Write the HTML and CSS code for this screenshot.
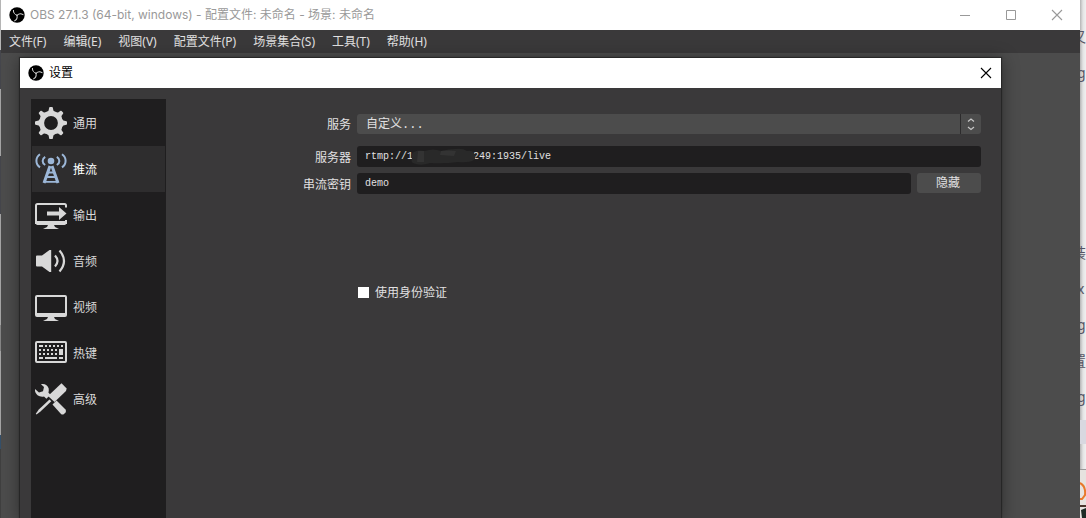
FILE: index.html
```html
<!DOCTYPE html>
<html lang="zh-CN">
<head>
<meta charset="utf-8">
<title>OBS 设置</title>
<link rel="stylesheet" href="styles.css">
</head>
<body>
<svg class="defs" aria-hidden="true">
  <symbol id="obs" viewBox="0 0 16 16">
    <circle cx="8" cy="8" r="7.7" fill="#000"/>
    <g fill="none" stroke="#d8d8d8" stroke-width="1" stroke-linecap="round">
      <path id="blade" d="M8 8.3C5.8 7.6 4.3 6 4.4 3.4"/>
      <use href="#blade" transform="rotate(120 8 8.3)"/>
      <use href="#blade" transform="rotate(240 8 8.3)"/>
    </g>
  </symbol>
  <symbol id="cross" viewBox="0 0 12 12"><path d="M1 1l10 10M11 1L1 11" fill="none" stroke="currentColor" stroke-width="1.1"/></symbol>
</svg>
<div class="desktop">
  <div class="behind-left"></div>
  <div class="window">
    <header class="titlebar">
      <svg class="logo"><use href="#obs"/></svg>
      <span class="window-title">OBS 27.1.3 (64-bit, windows) - 配置文件: 未命名 - 场景: 未命名</span>
      <div class="window-buttons">
        <button class="caption" aria-label="最小化"><svg viewBox="0 0 12 12"><path d="M1 6.5h10" stroke="currentColor"/></svg></button>
        <button class="caption" aria-label="最大化"><svg viewBox="0 0 12 12"><path d="M1.5 1.5h9v9h-9z" fill="none" stroke="currentColor"/></svg></button>
        <button class="caption" aria-label="关闭"><svg><use href="#cross"/></svg></button>
      </div>
    </header>
    <nav class="menubar">
      <button>文件(F)</button><button>编辑(E)</button><button>视图(V)</button><button>配置文件(P)</button><button>场景集合(S)</button><button>工具(T)</button><button>帮助(H)</button>
    </nav>
    <main class="workspace">
      <section class="dialog">
        <header class="dialog-title">
          <svg class="logo"><use href="#obs"/></svg>
          <h1>设置</h1>
          <button class="dialog-close" aria-label="关闭"><svg><use href="#cross"/></svg></button>
        </header>
        <div class="dialog-body">
          <nav class="sidebar">
            <button class="item"><svg viewBox="0 0 32 32">
              <circle cx="16" cy="16" r="9.4" fill="none" stroke="currentColor" stroke-width="5"/>
              <g fill="currentColor">
                <path id="teeth" d="M11.6 5.5L13.6 3.6 14.2.6Q14.4 0 15 0h2q.6 0 .8.6l.6 3 2 1.9zM11.6 26.5l2 1.9.6 3q.2.6.8.6h2q.6 0 .8-.6l.6-3 2-1.9z"/>
                <use href="#teeth" transform="rotate(45 16 16)"/><use href="#teeth" transform="rotate(90 16 16)"/><use href="#teeth" transform="rotate(135 16 16)"/>
              </g></svg><span>通用</span></button>
            <button class="item selected"><svg viewBox="0 0 32 32">
              <g fill="none" stroke="currentColor" stroke-width="2">
                <path d="M5 1.2C.2 4.6.2 11 5 14.4M27 1.2c4.8 3.4 4.8 9.8 0 13.2M10.2 3.8c-3.4 2-3.4 6.2 0 8.2M21.8 3.8c3.4 2 3.4 6.2 0 8.2"/>
                <path d="M15 13L9 30M17 13L23 30" stroke-width="3"/>
                <path d="M13 19.5h6M11.5 24h9M10 28.8h12" stroke-width="1.8"/>
              </g>
              <circle cx="16" cy="8" r="3.3" fill="currentColor"/></svg><span>推流</span></button>
            <button class="item"><svg viewBox="0 0 32 32">
              <path d="M31 8.5V6.5Q31 5 29.5 5H2.5Q1 5 1 6.5V24h30v-3" fill="none" stroke="currentColor" stroke-width="2"/>
              <path d="M1 22h30v2.5q0 1.5-1.5 1.5h-27Q1 26 1 24.5zM13 26h6l1 2 4 2H8l4-2zM12 12.5h12V8l7.5 6.5L24 21v-4.5H12z" fill="currentColor"/></svg><span>输出</span></button>
            <button class="item"><svg viewBox="0 0 32 32">
              <path d="M1 11.5Q1 10.5 2 10.5h5L14.5 5h1.7v22h-1.7L7 21.5H2q-1 0-1-1z" fill="currentColor"/>
              <path d="M20 10.5q5 5.5 0 11M24.5 5.5q9 10.5 0 21" fill="none" stroke="currentColor" stroke-width="2.2"/></svg><span>音频</span></button>
            <button class="item"><svg viewBox="0 0 32 32">
              <path d="M2 5h28q1 0 1 1v17H1V6q0-1 1-1z" fill="none" stroke="currentColor" stroke-width="2"/>
              <path d="M0 22h32v2q0 2-2 2H2q-2 0-2-2zM13 26h6l1 2 4 2H8l4-2z" fill="currentColor"/></svg><span>视频</span></button>
            <button class="item"><svg viewBox="0 0 32 32">
              <rect x="1" y="5" width="30" height="20" rx="1" fill="none" stroke="currentColor" stroke-width="2"/>
              <path d="M4 8h4v2H4zM10 8h2v2h-2zM14 8h2v2h-2zM18 8h2v2h-2zM22 8h2v2h-2zM26 8h2v2h-2zM4 12h2v2H4zM8 12h2v2H8zM12 12h2v2h-2zM16 12h2v2h-2zM20 12h2v2h-2zM24 12h4v6h-4zM4 16h2v2H4zM8 16h2v2H8zM12 16h2v2h-2zM16 16h2v2h-2zM20 16h2v2h-2zM4 20h4v2H4zM10 20h12v2H10zM24 20h4v2h-4z" fill="currentColor"/></svg><span>热键</span></button>
            <button class="item"><svg viewBox="0 0 32 32">
              <g fill="currentColor">
                <path d="M6 1.2C9 .2 13 2 13.7 5.5q.3 2-.3 4l2 2.3-4 4-2.4-2.3C5 14.5.8 12 0 8V6l4 3.5 4-1.3L9 4z"/>
                <path d="M26.5.3L31.7 5.5 31 8 19.5 19 13 13z"/>
                <path d="M14.5 16.5l1.8 1.8L5.5 28.5 1.5 31.5.8 30.8 3.8 26.5z"/>
                <path d="M17.5 21.5l4-4 9 9q1 1.5 0 3l-1.5 1.5q-1.5 1-3 0z"/>
              </g></svg><span>高级</span></button>
          </nav>
          <form class="form">
            <div class="row">
              <label for="service">服务</label>
              <div class="combo">
                <select id="service"><option>自定义...</option></select>
                <svg class="arrows" viewBox="0 0 20 20"><path d="M7 7.5L10 5l3 2.5M7 13l3 2.500 3-2.500" fill="none" stroke="currentColor" stroke-width="1.2"/></svg>
              </div>
            </div>
            <div class="row">
              <label for="server">服务器</label>
              <div class="server">
                <input id="server" type="text" value="rtmp://1          249:1935/live">
                <svg class="smudge" viewBox="0 0 66 16"><path d="M2 5q3-5 13-3 8-3 16 0 8-2 14-2 8-1 12 2 5-1 7 2 3 4 0 7-5 3-16 2-14 2-28 1-8 3-14 1-6-1-4-5-1-3 0-5z" fill="#292929"/><path d="M8 2h6v11H7zM31 2q8-1 15 0l-2 5-14-1z" fill="#333"/></svg>
              </div>
            </div>
            <div class="row">
              <label for="key">串流密钥</label>
              <div class="key-row">
                <input id="key" type="text" value="demo">
                <button type="button" class="hide">隐藏</button>
              </div>
            </div>
            <div class="row auth">
              <input id="auth" type="checkbox">
              <label for="auth">使用身份验证</label>
            </div>
          </form>
        </div>
      </section>
    </main>
  </div>
  <aside class="behind-right">
    <ul class="lines">
      <li class="wide">又</li><li>gi</li><li></li><li></li><li></li><li></li><li class="wide">装</li><li>x</li><li>gi</li><li class="wide">置</li><li>gi</li>
    </ul>
    <div class="band"></div>
    <div class="page-edge"></div>
    <svg class="picture" viewBox="0 0 6 48"><path d="M0 0h6v48H0z" fill="#e6e3df"/><path d="M0 13q6 3 5 12l-3 4H0" fill="none" stroke="#e8792b" stroke-width="2"/><path d="M0 35h6v2H0z" fill="#4a342a"/><path d="M1 40l5-2v10H2z" fill="#1d2b25"/></svg>
  </aside>
</div>
</body>
</html>
```
FILE: styles.css
```css
* { box-sizing: border-box; }
body {
  margin: 0;
  font: 12px/16px "Noto Sans", "Noto Sans CJK SC", sans-serif;
  color: #e1e0e1;
}
button, input, select { font: inherit; color: inherit; margin: 0; border: 0; padding: 0; background: none; }
.defs { position: absolute; width: 0; height: 0; }
.desktop { display: grid; grid-template-columns: 1px 1fr 6px; height: 100vh; overflow: hidden; }
.behind-left { background: linear-gradient(#b5b5b5 0 50px, #45464c 50px 89px, #a5a5a5 89px 156px, #45464c 156px 214px, #a5a5a5 214px 325px, #858585 325px 351px, #a5a5a5 351px 435px, #35506a 435px 449px, #404040 449px); }
.window { display: flex; flex-direction: column; min-width: 0; background: #4c4c4c; }

.titlebar { display: flex; align-items: center; height: 30px; padding-left: 8px; background: #fff; color: #999; }
.logo { flex: none; width: 16px; height: 16px; }
.window-title { margin: 0 auto 0 5px; font-family: Inter, "Noto Sans CJK SC", sans-serif; white-space: nowrap; }
.window-buttons { display: flex; }
.caption { width: 46px; height: 28px; display: grid; place-items: center; }
.caption svg, .dialog-close svg { width: 12px; height: 12px; }

.menubar { display: flex; gap: 17px; height: 23px; padding: 1px 0 0 8px; background: #3a393a; }
.menubar button { white-space: nowrap; }

.workspace { flex: 1; display: flex; min-height: 0; padding: 5px 79px 0 19px; }
.dialog { flex: 1; display: flex; flex-direction: column; background: #3a393a; box-shadow: 0 2px 16px 1px rgba(0, 0, 0, .4), 0 0 1px 1px #303030; }
.dialog-title { display: flex; align-items: center; height: 30px; padding-left: 8px; background: #fff; color: #000; }
.dialog-title h1 { margin: 0 auto 0 5px; font: inherit; }
.dialog-close { width: 30px; height: 28px; display: grid; place-items: center; }
.dialog-body { flex: 1; display: flex; min-height: 0; padding: 11px 20px 0 11px; }

.sidebar { flex: none; width: 135px; padding: 1px; background: #1f1e1f; }
.item { display: flex; align-items: center; gap: 6px; width: 100%; height: 46px; padding-left: 3px; color: #d8d8d8; }
.item svg { width: 32px; height: 32px; }
.item span { padding-top: 2px; }
.selected { background: #2e2d2e; color: #fff; }
.selected svg { color: #9cb7d8; }

.form { flex: 1; padding-top: 15px; font-family: "Liberation Mono", "Noto Sans CJK SC", monospace; }
.row { display: grid; grid-template-columns: 185px 1fr; column-gap: 6px; align-items: center; margin-bottom: 6px; }
.row:first-child { margin-bottom: 12px; }
.row label { padding-top: 4px; text-align: right; }
.combo, .server { position: relative; }
.combo select { display: block; width: 100%; height: 20px; padding: 2px 0 0 9px; appearance: none; border-radius: 3px; background: #4c4c4c; }
.arrows { position: absolute; top: 0; right: 0; width: 21px; height: 20px; border-left: 1px solid #2c2b2c; color: #c8c8c8; pointer-events: none; }
.row input[type="text"] { display: block; width: 100%; height: 21px; padding: 0 8px; border-radius: 3px; background: #1f1e1f; font-size: 10px; }
.smudge { position: absolute; top: 3px; left: 53px; width: 66px; height: 16px; overflow: visible; }
.key-row { display: flex; gap: 6px; }
.row .key-row input { flex: 1; min-width: 0; }
.hide { flex: none; width: 64px; height: 20px; padding: 2px 2px 0 0; border-radius: 3px; background: #4c4c4c; }
.auth { display: flex; gap: 6px; margin: 88px 0 0 192px; }
.auth input { width: 11px; height: 11px; appearance: none; background: #fff; }

.behind-right { display: flex; flex-direction: column; overflow: hidden; background: linear-gradient(90deg, #b5b5b5, #e4e4e4 3px, #f0f0f0); color: #555564; }
.lines { margin: 0; padding: 19px 0 0; list-style: none; font-size: 14px; line-height: 36px; }
.lines li { height: 36px; margin-left: -3px; white-space: nowrap; }
.lines .wide { margin-left: -8px; }
.band { height: 24px; margin-top: 5px; background: #d8d8e0; }
.page-edge { height: 26px; border-bottom: 1px solid #999; }
.picture { width: 6px; height: 48px; }
```
